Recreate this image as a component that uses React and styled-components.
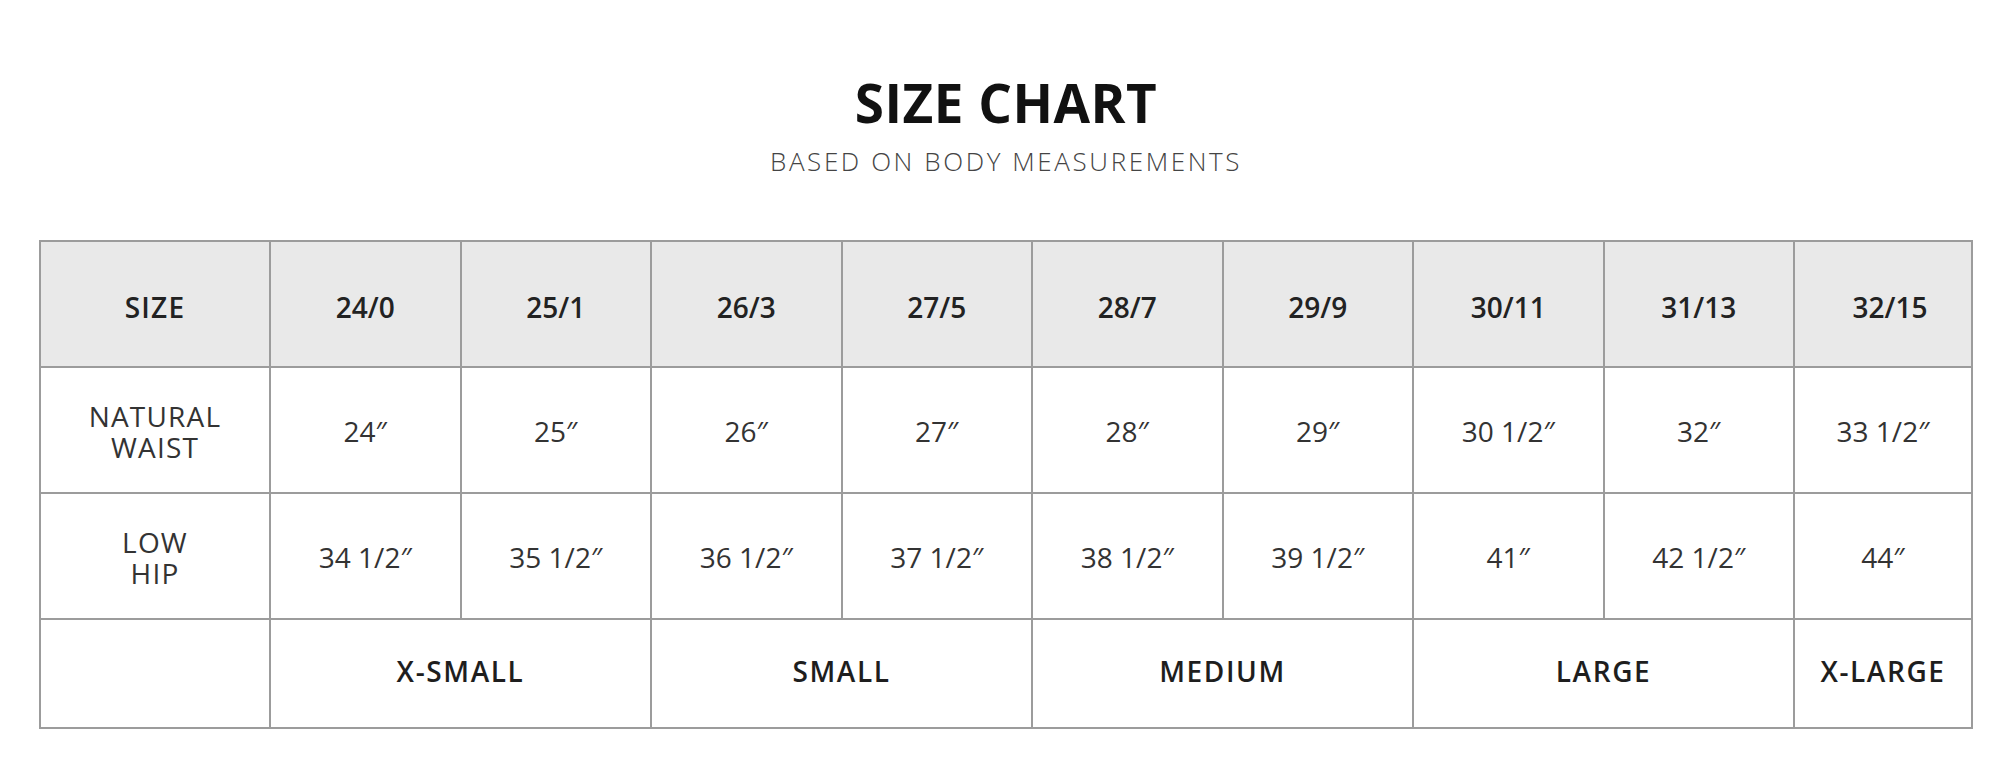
import React from "react";
import styled, { createGlobalStyle } from "styled-components";

const Global = createGlobalStyle`
  html, body { margin: 0; padding: 0; background: #ffffff; }
  body { font-family: "Open Sans", "Liberation Sans", Arial, sans-serif; }
`;

const Page = styled.div`
  width: 1934px;
  margin-left: 39px;
  padding-top: 76px;
  display: flex;
  flex-direction: column;
  align-items: center;
`;

const Title = styled.h1`
  margin: 0;
  font-size: 53px;
  line-height: 53px;
  font-weight: 700;
  color: #111111;
  letter-spacing: 0.5px;
`;

const Subtitle = styled.p`
  margin: 20px 0 0;
  font-size: 26px;
  line-height: 25px;
  font-weight: 300;
  color: #444444;
  letter-spacing: 2.6px;
`;

const Table = styled.table`
  margin-top: 66px;
  width: 1934px;
  border-collapse: collapse;
  table-layout: fixed;
  border: 2px solid #a2a2a2;
`;

const Row = styled.tr`
  height: ${(p) => p.$h}px;
  background: ${(p) => (p.$head ? "#e9e9e9" : "#ffffff")};
`;

const Cell = styled.td`
  border: 2px solid #9c9c9c;
  padding: ${(p) => (p.$head ? "7px 0 0" : "3px 0 0")};
  padding-left: ${(p) => (p.$shift ? "14px" : "0")};
  text-align: center;
  vertical-align: middle;
  font-size: 28px;
  line-height: 31px;
  font-weight: ${(p) => (p.$head ? 600 : 400)};
  color: ${(p) => (p.$head ? "#222222" : "#333333")};
  letter-spacing: ${(p) => (p.$label ? "1.2px" : "0")};
`;

const Line = styled.span`
  display: block;
`;

const SizeCell = styled.td`
  border: 2px solid #9c9c9c;
  padding: 0 0 4px;
  text-align: center;
  vertical-align: middle;
  font-size: 28px;
  line-height: 31px;
  font-weight: 600;
  color: #1e1e1e;
  letter-spacing: 1.6px;
`;

const sizes = ["24/0", "25/1", "26/3", "27/5", "28/7", "29/9", "30/11", "31/13", "32/15"];
const waist = ["24″", "25″", "26″", "27″", "28″", "29″", "30 1/2″", "32″", "33 1/2″"];
const hip = ["34 1/2″", "35 1/2″", "36 1/2″", "37 1/2″", "38 1/2″", "39 1/2″", "41″", "42 1/2″", "44″"];
const groups = [
  { label: "X-SMALL", span: 2 },
  { label: "SMALL", span: 2 },
  { label: "MEDIUM", span: 2 },
  { label: "LARGE", span: 2 },
  { label: "X-LARGE", span: 1 },
];

export default function App() {
  return (
    <>
      <Global />
      <Page>
        <Title>SIZE CHART</Title>
        <Subtitle>BASED ON BODY MEASUREMENTS</Subtitle>
        <Table>
          <colgroup>
            <col style={{ width: 230 }} />
            {sizes.slice(0, 8).map((s) => (
              <col key={s} style={{ width: 190.5 }} />
            ))}
            <col />
          </colgroup>
          <tbody>
            <Row $head $h={126}>
              <Cell $head $label>SIZE</Cell>
              {sizes.map((s, i) => (
                <Cell key={s} $head $shift={i === sizes.length - 1}>{s}</Cell>
              ))}
            </Row>
            <Row $h={126}>
              <Cell $label>
                <Line>NATURAL</Line>
                <Line>WAIST</Line>
              </Cell>
              {waist.map((v, i) => (
                <Cell key={i}>{v}</Cell>
              ))}
            </Row>
            <Row $h={126}>
              <Cell $label>
                <Line>LOW</Line>
                <Line>HIP</Line>
              </Cell>
              {hip.map((v, i) => (
                <Cell key={i}>{v}</Cell>
              ))}
            </Row>
            <Row $h={109}>
              <Cell />
              {groups.map((g) => (
                <SizeCell key={g.label} colSpan={g.span}>{g.label}</SizeCell>
              ))}
            </Row>
          </tbody>
        </Table>
      </Page>
    </>
  );
}
